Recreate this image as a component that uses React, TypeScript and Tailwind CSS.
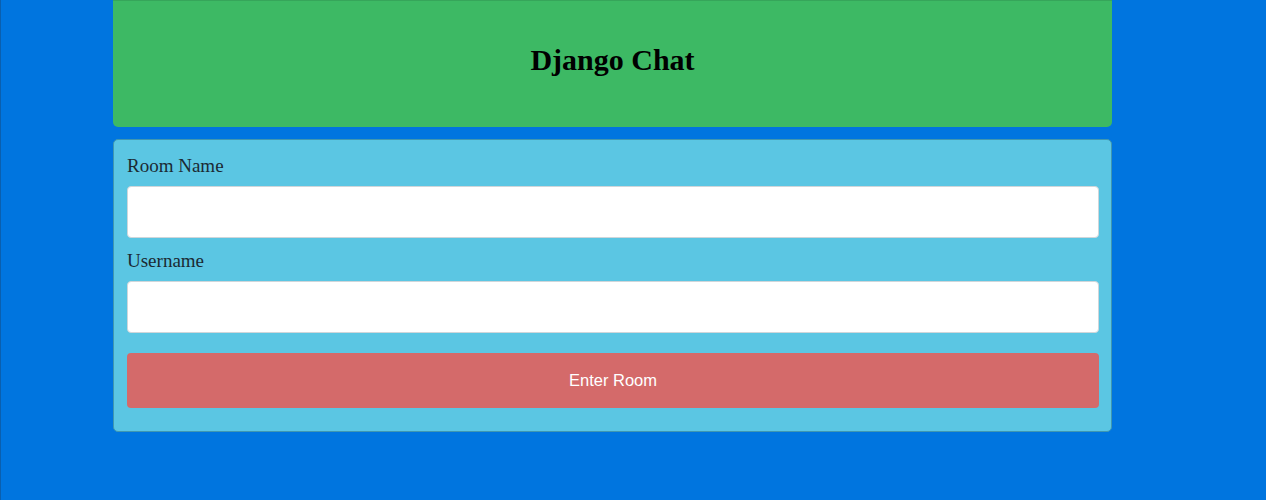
export default function App() {
  return (
    <div className="min-h-[500px] bg-[#0075df] border-l border-[#0a5fae]">
      <div className="ml-[112px] w-[999px]">
        <header className="h-[127px] bg-[#3db964] rounded-b-[5px] border-t border-[#36a55a] flex items-center justify-center">
          <h1 className="text-[30px] font-bold text-black [font-family:'Liberation_Serif',serif] -mt-[10px]">
            Django Chat
          </h1>
        </header>

        <div className="mt-[12px] bg-[#5bc6e3] border border-[#3f97b0] rounded-[5px] pl-[13px] pr-[12px] pt-[12px] pb-[23px]">
          <label className="block text-[19px] leading-[28px] text-[#1b2a33] [font-family:'Liberation_Serif',serif] mb-[6px]">
            Room Name
          </label>
          <input
            type="text"
            className="block w-full h-[52px] bg-white border border-[#cfd6da] rounded-[4px] outline-none"
          />
          <label className="block mt-[9px] text-[19px] leading-[28px] text-[#1b2a33] [font-family:'Liberation_Serif',serif] mb-[6px]">
            Username
          </label>
          <input
            type="text"
            className="block w-full h-[52px] bg-white border border-[#cfd6da] rounded-[4px] outline-none"
          />
          <button className="mt-[20px] w-full h-[55px] bg-[#d46a6a] rounded-[4px] text-white text-[16.5px] [font-family:'Liberation_Sans',sans-serif]">
            Enter Room
          </button>
        </div>
      </div>
    </div>
  )
}
